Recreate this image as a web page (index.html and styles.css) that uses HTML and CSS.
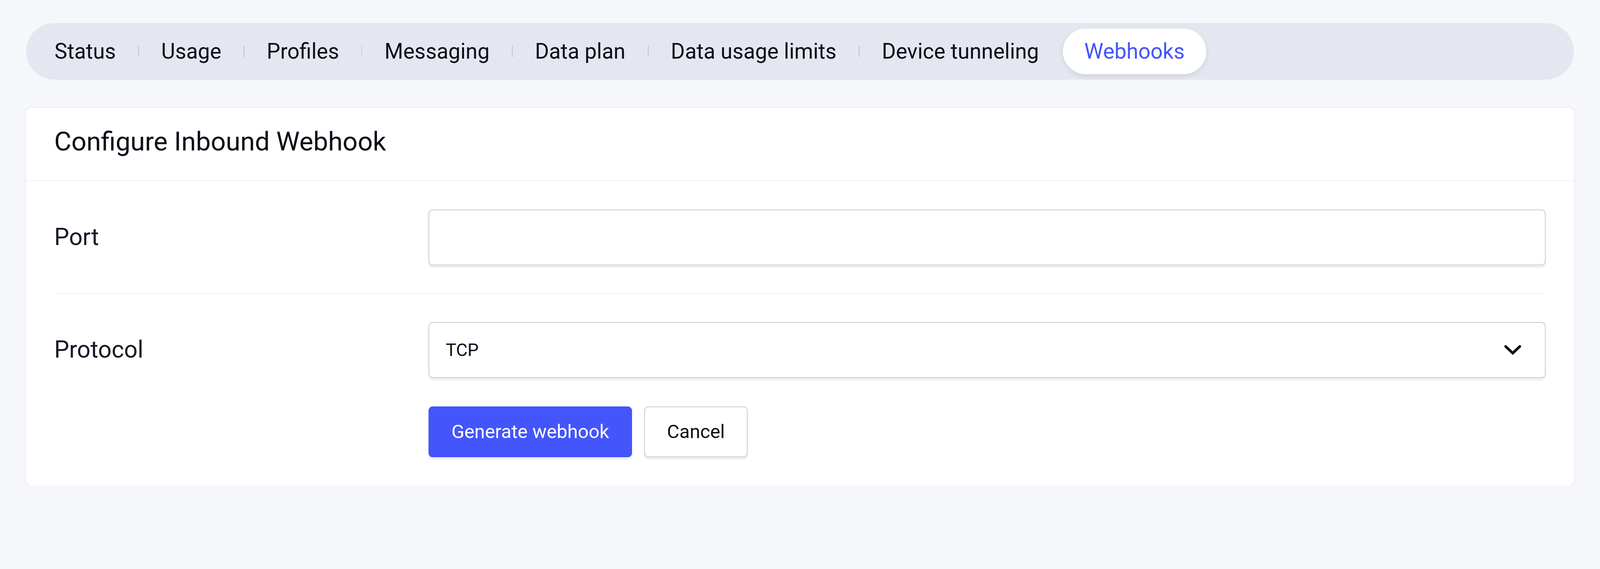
FILE: index.html
```html
<!DOCTYPE html>
<html lang="en">
<head>
<meta charset="utf-8">
<title>Configure Inbound Webhook</title>
<link rel="stylesheet" href="styles.css">
</head>
<body>
<div class="page">
  <nav class="tabs">
    <a class="tab">Status</a><span class="sep"></span>
    <a class="tab">Usage</a><span class="sep"></span>
    <a class="tab">Profiles</a><span class="sep"></span>
    <a class="tab">Messaging</a><span class="sep"></span>
    <a class="tab">Data plan</a><span class="sep"></span>
    <a class="tab">Data usage limits</a><span class="sep"></span>
    <a class="tab">Device tunneling</a><span class="sep sep-hidden"></span>
    <a class="tab tab-active">Webhooks</a>
  </nav>

  <section class="card">
    <header class="card-head">
      <h2 class="card-title">Configure Inbound Webhook</h2>
    </header>
    <div class="card-body">
      <div class="row row-divided">
        <label class="row-label" for="port">Port</label>
        <input class="field" id="port" type="text">
      </div>
      <div class="row">
        <label class="row-label">Protocol</label>
        <div class="field field-select">
          <span class="select-value">TCP</span>
          <svg class="chevron" viewBox="0 0 48 28" aria-hidden="true">
            <path d="M4 4 L24 23 L44 4" fill="none" stroke="#0b0d17" stroke-width="7.5" stroke-linecap="round" stroke-linejoin="miter"/>
          </svg>
        </div>
      </div>
      <div class="actions">
        <button class="btn btn-primary" type="button">Generate webhook</button>
        <button class="btn btn-secondary" type="button">Cancel</button>
      </div>
    </div>
  </section>
</div>
</body>
</html>
```

FILE: styles.css
```css
/* 1rem = 10 units of a 4548-unit-wide design, so the page keeps its
   proportions whatever the real viewport width is. */
html {
  font-size: calc(100vw / 454.8);
}

html, body {
  margin: 0;
  padding: 0;
}

body {
  background: #f6f7fb;
  font-family: Roboto, "Noto Sans", "Liberation Sans", sans-serif;
  color: #0b0d17;
}

.page {
  padding: 6.6rem 7.4rem 0 7.4rem;
}

/* ---------- Tabs ---------- */
.tabs {
  display: flex;
  align-items: center;
  height: 16rem;
  box-sizing: border-box;
  padding: 0 2rem;
  background: #e4e7ef;
  border-radius: 8rem;
}

.tab {
  display: flex;
  align-items: center;
  height: 13.1rem;
  padding: 0 6.1rem;
  font-size: 6.1rem;
  line-height: 1;
  color: #0b0d17;
  white-space: nowrap;
  border-radius: 6.6rem;
  cursor: pointer;
}

.tab-active {
  background: #ffffff;
  color: #4454fb;
  box-shadow: 0 0.6rem 1.4rem rgba(30, 40, 80, 0.10);
}

.sep {
  width: 0.3rem;
  height: 3.2rem;
  margin: 0 0.2rem;
  background: #c9cdd8;
  flex: none;
}

.sep-hidden {
  visibility: hidden;
}

/* ---------- Card ---------- */
.card {
  margin-top: 8rem;
  background: #ffffff;
  border-radius: 1.4rem;
  box-shadow: 0 0.2rem 1.2rem rgba(30, 40, 80, 0.06), 0 0 0 0.1rem rgba(30, 40, 80, 0.02);
}

.card-head {
  display: flex;
  align-items: center;
  height: 20.8rem;
  box-sizing: border-box;
  padding: 0 8rem 1.4rem 8rem;
  border-bottom: 0.3rem solid #eef0f5;
}

.card-title {
  margin: 0;
  font-size: 7.5rem;
  font-weight: 400;
  line-height: 1;
  color: #0b0d17;
}

.card-body {
  padding: 0 8rem 8rem 8rem;
}

.row {
  display: grid;
  grid-template-columns: 106.4rem 1fr;
  align-items: center;
  padding-top: 8rem;
}

.row-divided {
  padding-top: 8.1rem;
  padding-bottom: 7.9rem;
  border-bottom: 0.3rem solid #f0f1f5;
}

.row-label {
  font-size: 6.75rem;
  line-height: 1;
  color: #161925;
}

.field {
  height: 15.9rem;
  box-sizing: border-box;
  width: 100%;
  margin: 0;
  border: 0.3rem solid #c6ccd8;
  border-radius: 1.2rem;
  background: #ffffff;
  box-shadow: 0 0.6rem 0.3rem rgba(20, 20, 50, 0.07);
  font-family: inherit;
  font-size: 5rem;
  padding: 0 4.7rem;
  outline: none;
}

.field-select {
  display: flex;
  align-items: center;
  justify-content: space-between;
  padding: 0 6.8rem 0 4.7rem;
}

.select-value {
  font-size: 5rem;
  line-height: 1;
  color: #0b0d17;
}

.chevron {
  display: block;
  flex: none;
  width: 4.8rem;
  height: 2.8rem;
}

/* ---------- Actions ---------- */
.actions {
  display: flex;
  gap: 3.4rem;
  margin-top: 8.1rem;
  padding-left: 106.4rem;
}

.btn {
  height: 14.4rem;
  padding: 0 6.3rem;
  border: 0.3rem solid #c6ccd8;
  border-radius: 1.2rem;
  font-family: inherit;
  font-size: 5.4rem;
  line-height: 1;
  box-shadow: 0 0.6rem 0.3rem rgba(20, 20, 50, 0.07);
  cursor: pointer;
}

.btn-primary {
  background: #4455fb;
  border-color: #4455fb;
  color: #ffffff;
}

.btn-secondary {
  background: #ffffff;
  color: #0b0d17;
}
```
